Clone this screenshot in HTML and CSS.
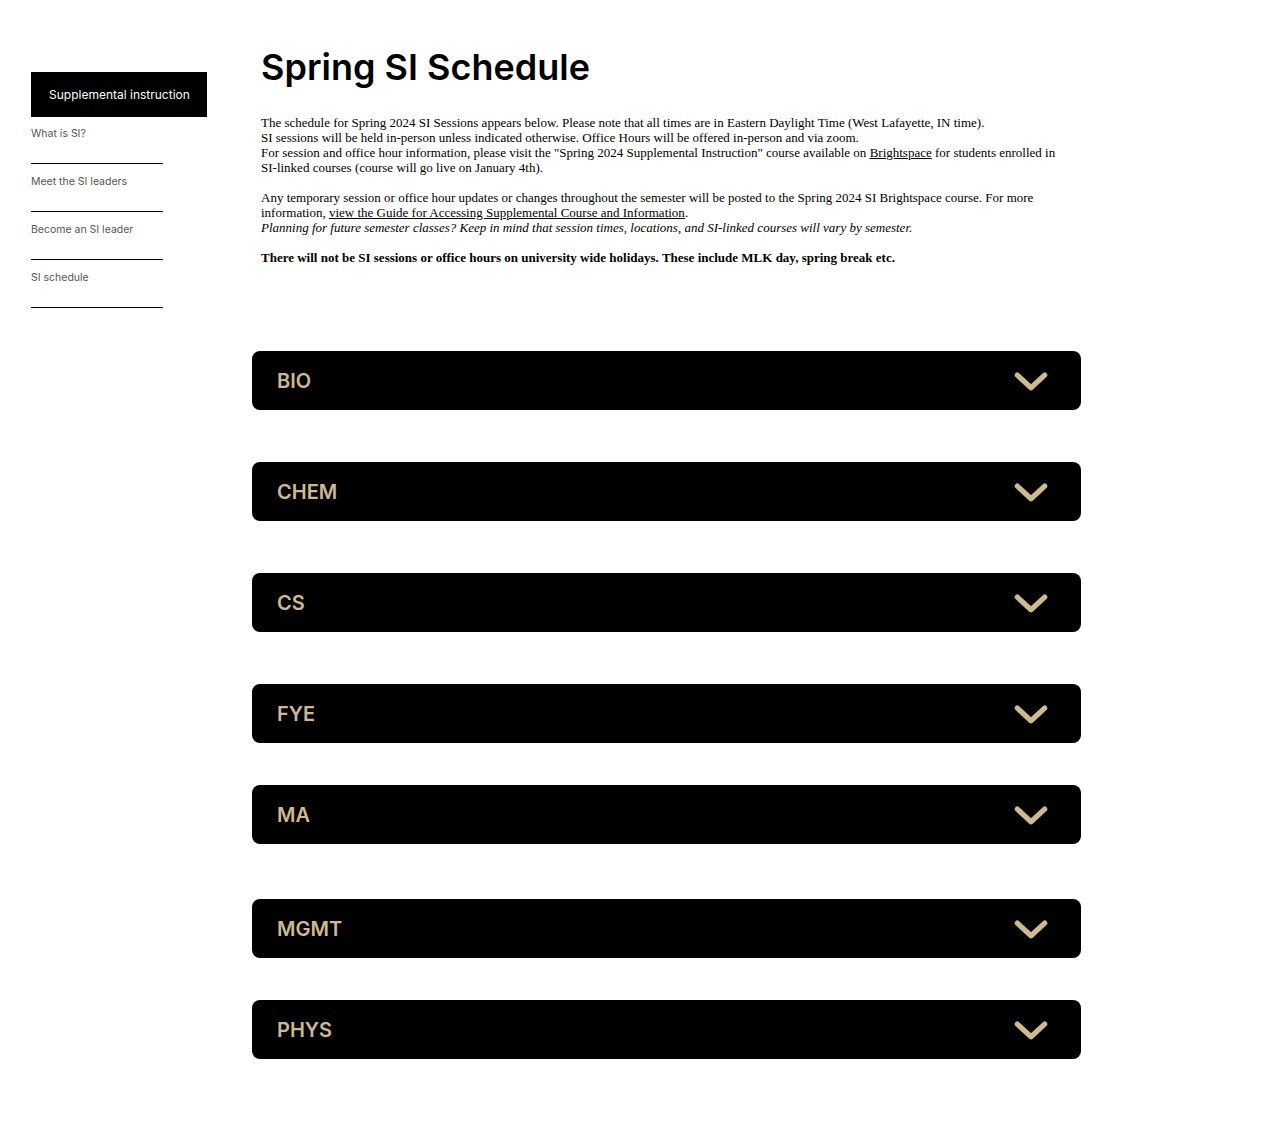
FILE: index.html
```html
<!DOCTYPE html>
<html lang="en">
<head>
    <meta charset="UTF-8">
    <meta name="viewport" content="width=device-width, initial-scale=1.0">
    <title>Spring SI Schedule</title>
    <link rel="stylesheet" href="styles.css">
</head>
<body>

    <div class="page">

        <!-- linke Navigation -->
        <nav class="sidebar">
            <div class="side-title">Supplemental instruction</div>
            <a class="side-link" href="#">What is SI?</a>
            <a class="side-link" href="#">Meet the SI leaders</a>
            <a class="side-link" href="#">Become an SI leader</a>
            <a class="side-link" href="#">SI schedule</a>
        </nav>

        <main class="content">
            <h1 class="title">Spring SI Schedule</h1>

            <div class="intro">
                <p>
                    The schedule for Spring 2024 SI Sessions appears below. Please note that all times are in Eastern Daylight Time (West Lafayette, IN time).<br>
                    SI sessions will be held in-person unless indicated otherwise. Office Hours will be offered in-person and via zoom.<br>
                    For session and office hour information, please visit the "Spring 2024 Supplemental Instruction" course available on <a href="#">Brightspace</a> for students enrolled in <span class="nowrap">SI-linked</span> courses (course will go live on January 4th).
                </p>
                <p>
                    Any temporary session or office hour updates or changes throughout the semester will be posted to the Spring 2024 SI Brightspace course. For more information, <a href="#">view the Guide for Accessing Supplemental Course and Information</a>.<br>
                    <em>Planning for future semester classes? Keep in mind that session times, locations, and SI-linked courses will vary by semester.</em>
                </p>
                <p>
                    <strong>There will not be SI sessions or office hours on university wide holidays. These include MLK day, spring break etc.</strong>
                </p>
            </div>

            <div class="accordions">
                <button class="acc gap-52">BIO <svg class="chev" viewBox="0 0 32 20"><path d="M3 3 L16 15 L29 3"/></svg></button>
                <button class="acc gap-52">CHEM <svg class="chev" viewBox="0 0 32 20"><path d="M3 3 L16 15 L29 3"/></svg></button>
                <button class="acc gap-52">CS <svg class="chev" viewBox="0 0 32 20"><path d="M3 3 L16 15 L29 3"/></svg></button>
                <button class="acc gap-42">FYE <svg class="chev" viewBox="0 0 32 20"><path d="M3 3 L16 15 L29 3"/></svg></button>
                <button class="acc gap-55">MA <svg class="chev" viewBox="0 0 32 20"><path d="M3 3 L16 15 L29 3"/></svg></button>
                <button class="acc gap-42">MGMT <svg class="chev" viewBox="0 0 32 20"><path d="M3 3 L16 15 L29 3"/></svg></button>
                <button class="acc">PHYS <svg class="chev" viewBox="0 0 32 20"><path d="M3 3 L16 15 L29 3"/></svg></button>
            </div>
        </main>

    </div>

</body>
</html>
```

FILE: styles.css
```css
body {
    margin: 0;
    background-color: white;
}

.page {
    display: flex;
    padding-left: 31px;
}

.sidebar {
    display: flex;
    flex-direction: column;
    width: 176px;
    padding-top: 72px;
}

.side-title {
    background-color: black;
    color: white;
    font-family: 'Inter', sans-serif;
    font-size: 12px;
    height: 45px;
    line-height: 45px;
    padding-left: 18px;
}

.side-link {
    display: block;
    width: 132px;
    height: 47px;
    padding-top: 10px;
    box-sizing: border-box;
    border-bottom: 1px solid black;
    color: #555;
    text-decoration: none;
    font-family: 'Inter', sans-serif;
    font-size: 10.5px;
    line-height: 14px;
}

.side-link + .side-link {
    height: 48px;
    padding-top: 11px;
}

.content {
    margin-left: 45px;
    width: 829px;
}

.title {
    font-family: 'Inter', sans-serif;
    font-weight: 600;
    font-size: 36px;
    margin: 46px 0 0 9px;
    line-height: 42px;
}

.intro {
    margin: 27px 0 0 9px;
    max-width: 815px;
    font-family: 'Liberation Serif', serif;
    font-size: 13px;
    line-height: 15px;
    color: black;
}

.intro p {
    margin: 0 0 15px 0;
}

.intro a {
    color: black;
}

.nowrap {
    white-space: nowrap;
}

.accordions {
    margin-top: 86px;
    display: flex;
    flex-direction: column;
}

.acc {
    display: flex;
    justify-content: space-between;
    align-items: center;
    height: 59px;
    width: 829px;
    padding: 0 33px 0 25px;
    border: none;
    border-radius: 8px;
    background-color: black;
    color: #cfb991;
    font-family: 'Inter', sans-serif;
    font-weight: 600;
    font-size: 20px;
}

.chev {
    width: 34px;
    height: 21px;
    margin-top: 3px;
    fill: none;
    stroke: #cfb991;
    stroke-width: 5;
    stroke-linecap: round;
    stroke-linejoin: round;
}

.gap-52 { margin-bottom: 52px; }
.gap-42 { margin-bottom: 42px; }
.gap-55 { margin-bottom: 55px; }
```
